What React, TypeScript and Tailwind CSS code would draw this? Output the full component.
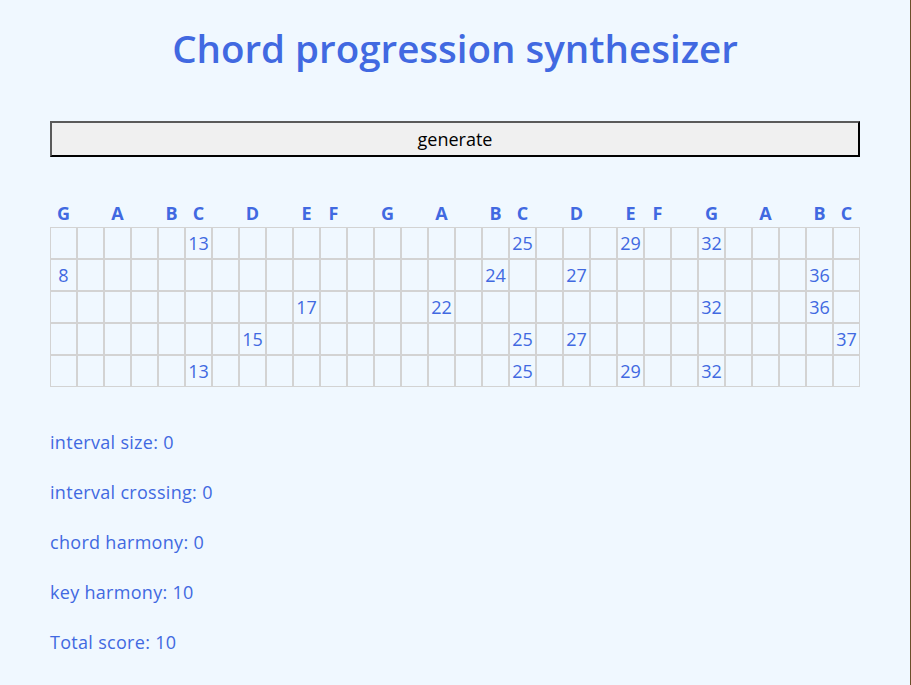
const notes = [
  "G", "", "A", "", "B", "C", "", "D", "", "E", "F", "", "G", "", "A",
  "", "B", "C", "", "D", "", "E", "F", "", "G", "", "A", "", "B", "C",
];

// column indexes of the notes picked for each chord; the cell shows index + 8
const chords = [
  [5, 17, 21, 24],
  [0, 16, 19, 28],
  [9, 14, 24, 28],
  [7, 17, 19, 29],
  [5, 17, 21, 24],
];

const scores = [
  { label: "interval size", value: 0 },
  { label: "interval crossing", value: 0 },
  { label: "chord harmony", value: 0 },
  { label: "key harmony", value: 10 },
  { label: "Total score", value: 10 },
];

export default function App() {
  return (
    <div className="min-h-screen w-full border-r border-[#6b4f2a] bg-[#f0f8ff] px-[50px] font-['Open_Sans',sans-serif] text-[#4169e1]">
      <h1 className="pt-[20px] text-center text-[38.5px] font-semibold leading-[56px]">
        Chord progression synthesizer
      </h1>

      <button className="mt-[45px] h-[36px] w-full border-2 border-t-[#5a5a5a] border-r-black border-b-black border-l-[#5a5a5a] bg-[#f0f0f0] text-[18px] text-black">
        generate
      </button>

      <div className="mt-[43px] grid grid-cols-[repeat(30,27px)]">
        {notes.map((n, i) => (
          <div key={i} className="h-[27px] text-center text-[18px] font-bold leading-[27px]">
            {n}
          </div>
        ))}
      </div>

      <table className="border-separate border-spacing-0">
        <tbody>
          {chords.map((chord, r) => (
            <tr key={r}>
              {notes.map((_, c) => (
                <td
                  key={c}
                  className="h-[32px] w-[27px] border border-[#d3d3d3] p-0 text-center text-[18px] leading-[30px]"
                >
                  {chord.includes(c) ? c + 8 : ""}
                </td>
              ))}
            </tr>
          ))}
        </tbody>
      </table>

      <div className="mt-[40px]">
        {scores.map((s) => (
          <p key={s.label} className="h-[50px] text-[18px] leading-[30px] tracking-[0.3px]">
            {s.label}: {s.value}
          </p>
        ))}
      </div>
    </div>
  );
}
